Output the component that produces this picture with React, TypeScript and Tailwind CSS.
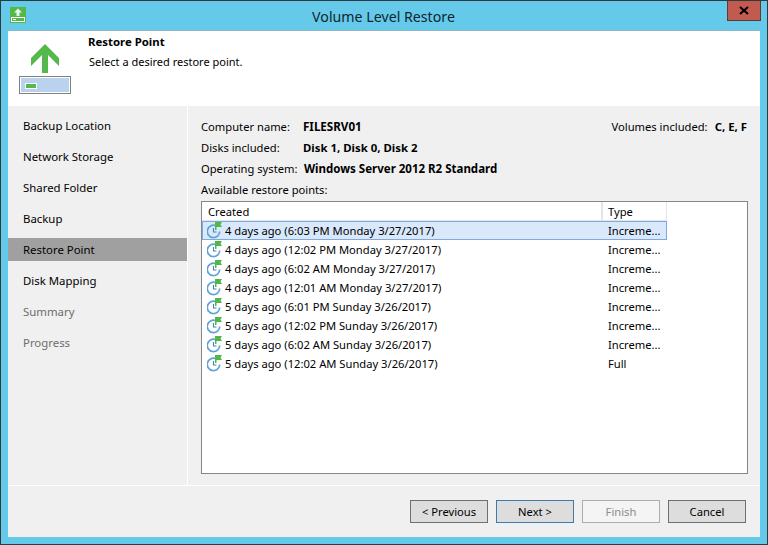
const steps = [
  { label: 'Backup Location' },
  { label: 'Network Storage' },
  { label: 'Shared Folder' },
  { label: 'Backup' },
  { label: 'Restore Point', active: true },
  { label: 'Disk Mapping' },
  { label: 'Summary', disabled: true },
  { label: 'Progress', disabled: true },
];

const points = [
  { created: '4 days ago (6:03 PM Monday 3/27/2017)', type: 'Increme...' },
  { created: '4 days ago (12:02 PM Monday 3/27/2017)', type: 'Increme...' },
  { created: '4 days ago (6:02 AM Monday 3/27/2017)', type: 'Increme...' },
  { created: '4 days ago (12:01 AM Monday 3/27/2017)', type: 'Increme...' },
  { created: '5 days ago (6:01 PM Sunday 3/26/2017)', type: 'Increme...' },
  { created: '5 days ago (12:02 PM Sunday 3/26/2017)', type: 'Increme...' },
  { created: '5 days ago (6:02 AM Sunday 3/26/2017)', type: 'Increme...' },
  { created: '5 days ago (12:02 AM Sunday 3/26/2017)', type: 'Full' },
];

function AppIcon() {
  return (
    <svg width="16" height="16" viewBox="0 0 16 16" className="ml-[2px] mt-[6px]">
      <rect width="16" height="16" fill="#53b848" />
      <path d="M8 1.5 L12 5.5 H9.5 V9 H6.5 V5.5 H4 Z" fill="#e8f5e6" />
      <rect x="1.5" y="10.5" width="13" height="4" fill="#53b848" stroke="#fff" />
      <rect x="3" y="12" width="3" height="1" fill="#fff" />
    </svg>
  );
}

function HeaderIcon() {
  return (
    <svg width="52" height="52" viewBox="0 0 52 52" className="ml-[11px] mt-[12px]">
      <path d="M26 1 L40 15 V23 L29 12 V30 H23 V12 L12 23 V15 Z" fill="#55b84a" />
      <rect x="0.5" y="33.5" width="51" height="17" fill="#b9d3ee" stroke="#808080" />
      <rect x="1.5" y="34.5" width="49" height="15" fill="none" stroke="#fff" />
      <rect x="6.5" y="40.5" width="11" height="5" fill="#55b84a" stroke="#fff" />
    </svg>
  );
}

function PointIcon() {
  return (
    <svg width="16" height="17" viewBox="0 0 16 17" className="shrink-0">
      <path d="M8.5 3.5 A6.2 6.2 0 1 0 12.7 9.5" fill="none" stroke="#5ea3d6" strokeWidth="1.7" />
      <path d="M6.5 6 V10 H9.5" fill="none" stroke="#3f86bd" strokeWidth="1.1" />
      <path d="M8 0 H15 L13.5 2.5 L15 5 H9.5 V8 H8 Z" fill="#4fb848" />
    </svg>
  );
}

function Btn({ label, primary, disabled }: { label: string; primary?: boolean; disabled?: boolean }) {
  return (
    <div
      className={
        'w-[78px] h-[23px] flex items-center justify-center border ' +
        (disabled
          ? 'border-[#adadad] bg-[#f4f4f4] text-[#8c8c8c]'
          : primary
            ? 'border-[#3d7bad] bg-[#dddddd] text-black'
            : 'border-[#707070] bg-[#dddddd] text-black')
      }
    >
      {label}
    </div>
  );
}

export default function App() {
  return (
    <div className="w-[768px] h-[545px] flex flex-col bg-[#65c9ea] border border-[#2d3a40] overflow-hidden text-[11.2px] leading-none text-black font-['Noto_Sans',sans-serif]">
      {/* Title bar */}
      <div className="h-[29px] shrink-0 px-[7px] grid grid-cols-[1fr_auto_1fr]">
        <AppIcon />
        <div className="text-[14.2px] text-[#10262e] pt-[9px] -ml-[1px]">Volume Level Restore</div>
        <div className="flex justify-end">
          <div className="w-[34px] h-[21px] -mt-px -mr-[1px] flex items-center justify-center bg-[#c15b50] border border-[#5d3a36]">
            <svg width="10" height="9" viewBox="0 0 10 9">
              <path d="M1 1 L9 8 M9 1 L1 8" stroke="#000" strokeWidth="2" />
            </svg>
          </div>
        </div>
      </div>

      <div className="flex-1 mx-[7px] mb-[7px] flex flex-col bg-[#f0f0f0] border-t border-[#8fb6c6]">
        {/* Header */}
        <div className="h-[75px] shrink-0 bg-white flex">
          <HeaderIcon />
          <div className="ml-[17px] pt-[5px]">
            <div className="font-bold text-[11.4px]">Restore Point</div>
            <div className="mt-[9px] ml-[1px] text-[11px]">Select a desired restore point.</div>
          </div>
        </div>

        <div className="flex-1 flex min-h-0">
          {/* Steps */}
          <div className="w-[180px] shrink-0 pt-[8px] flex flex-col gap-[8px] border-r border-white">
            {steps.map((s) => (
              <div
                key={s.label}
                className={
                  'h-[23px] pl-[15px] flex items-center text-[11.4px] ' +
                  (s.active ? 'bg-[#a0a0a0] text-black' : s.disabled ? 'text-[#6d6d6d]' : 'text-black')
                }
              >
                {s.label}
              </div>
            ))}
          </div>

          {/* Content */}
          <div className="flex-1 pl-[13px] pr-[12px] pt-[15px] flex flex-col whitespace-nowrap">
            <div className="flex justify-between h-[21px]">
              <div className="flex">
                <span className="w-[102px]">Computer name:</span>
                <span className="font-bold text-[11.6px]">FILESRV01</span>
              </div>
              <div className="flex gap-[7px] mr-[1px]">
                <span>Volumes included:</span>
                <span className="font-bold text-[11.4px]">C, E, F</span>
              </div>
            </div>
            <div className="flex h-[21px]">
              <span className="w-[102px]">Disks included:</span>
              <span className="font-bold text-[11.4px]">Disk 1, Disk 0, Disk 2</span>
            </div>
            <div className="flex h-[21px]">
              <span className="w-[102px]">Operating system:</span>
              <span className="font-bold text-[11.5px] ml-[1px]">Windows Server 2012 R2 Standard</span>
            </div>
            <div className="h-[17px]">Available restore points:</div>

            <div className="h-[273px] border border-[#82878b] bg-white">
              <div className="flex h-[19px] w-[465px] border-b border-[#e5e5e5]">
                <div className="w-[401px] pl-[6px] pt-[1px] flex items-center border-r-2 border-[#e5e5e5]">Created</div>
                <div className="flex-1 pl-[5px] pt-[1px] flex items-center border-r border-[#e5e5e5]">Type</div>
              </div>
              {points.map((p, i) => (
                <div
                  key={p.created}
                  className={
                    'flex h-[19px] w-[465px] items-center border ' +
                    (i === 0 ? 'bg-[#d9e9fb] border-[#7dabe0]' : 'border-transparent')
                  }
                >
                  <div className="w-[401px] pl-[4px] flex items-center gap-[2px]">
                    <PointIcon />
                    <span className="text-[11.2px]">{p.created}</span>
                  </div>
                  <div className="pl-[4px]">{p.type}</div>
                </div>
              ))}
            </div>
          </div>
        </div>

        {/* Footer */}
        <div className="h-[52px] shrink-0 border-t border-white flex justify-end gap-[8px] pt-[14px] pr-[14px]">
          <Btn label="< Previous" />
          <Btn label="Next >" primary />
          <Btn label="Finish" disabled />
          <Btn label="Cancel" />
        </div>
      </div>
    </div>
  );
}
